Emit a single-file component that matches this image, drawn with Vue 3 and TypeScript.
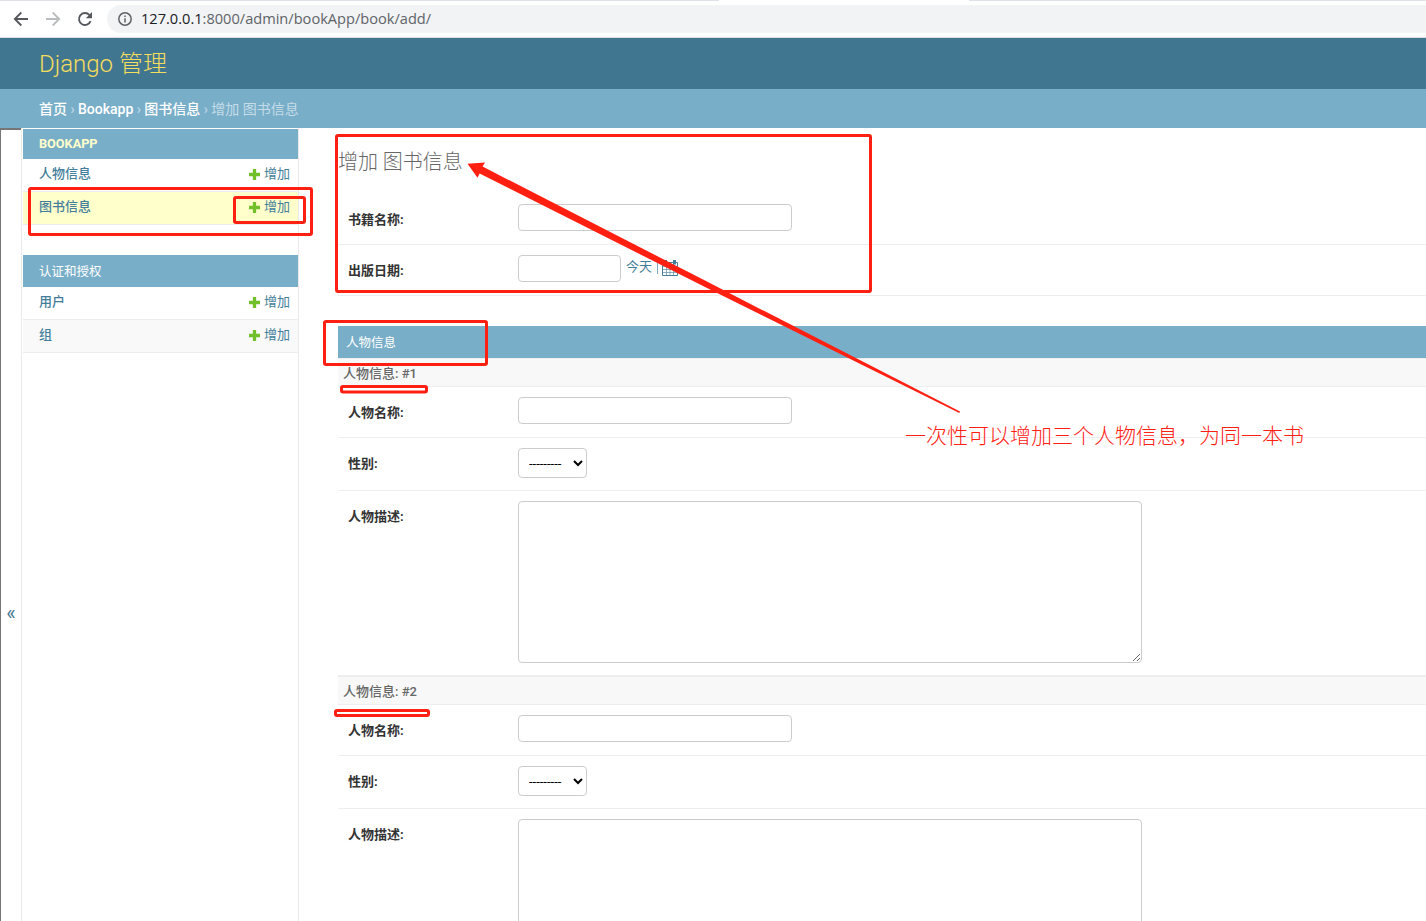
<script setup lang="ts">
import { ref } from 'vue'

interface NavItem {
  name: string
  current?: boolean
  alt?: boolean
}
interface NavApp {
  title: string
  latin?: boolean
  items: NavItem[]
}

const apps: NavApp[] = [
  { title: 'BOOKAPP', latin: true, items: [{ name: '人物信息' }, { name: '图书信息', current: true }] },
  { title: '认证和授权', items: [{ name: '用户' }, { name: '组', alt: true }] },
]

const book = ref({ title: '', date: '' })
const people = ref([1, 2].map((no) => ({ no, name: '', gender: '', desc: '' })))
</script>

<template>
  <div class="window">
    <div class="toolbar">
      <div class="tabline"><i class="tab-left"></i><i class="tab-right"></i></div>
      <svg class="nav-icon" viewBox="0 0 16 16"><path d="M15 8H2M8.3 1.5 1.8 8l6.5 6.5" /></svg>
      <svg class="nav-icon off" viewBox="0 0 16 16"><path d="M1 8h13M7.7 1.5 14.2 8l-6.5 6.5" /></svg>
      <svg class="nav-icon" viewBox="0 0 16 16">
        <path d="M13.6 10.2A6 6 0 1 1 12.3 3.8L14 5.6" />
        <path class="solid" d="M15 1v6.2H8.8z" />
      </svg>
      <div class="address">
        <svg class="info" viewBox="0 0 14 14">
          <circle cx="7" cy="7" r="6.2" />
          <path d="M7 6.2v4.2M7 3.5v1.5" />
        </svg>
        <span class="url"><b>127.0.0.1</b>:8000/admin/bookApp/book/add/</span>
      </div>
    </div>

    <header class="header">Django 管理</header>
    <nav class="breadcrumbs">
      <a>首页</a><i>›</i><a>Bookapp</a><i>›</i><a>图书信息</a><i>›</i><span>增加 图书信息</span>
    </nav>

    <div class="main">
      <button class="toggle" type="button">«</button>
      <aside class="sidebar">
        <section v-for="app in apps" :key="app.title" class="app">
          <h2 :class="{ latin: app.latin }">{{ app.title }}</h2>
          <div
            v-for="item in app.items"
            :key="item.name"
            class="model"
            :class="{ current: item.current, alt: item.alt }"
          >
            <a class="model-name">{{ item.name }}</a>
            <a class="add">
              <svg viewBox="0 0 10 10"><path d="M3.5 0h3v3.5H10v3H6.5V10h-3V6.5H0v-3h3.5z" /></svg>
              增加
            </a>
          </div>
        </section>
      </aside>

      <main class="content">
        <h1>增加 图书信息</h1>
        <div class="row">
          <label>书籍名称:</label>
          <input v-model="book.title" class="text" type="text" />
        </div>
        <div class="row">
          <label>出版日期:</label>
          <input v-model="book.date" class="text date" type="text" />
          <span class="shortcuts">
            今天<i></i>
            <svg viewBox="0 0 16 16">
              <path d="M.5 2.5h15v13H.5z" />
              <path class="grid" d="M1 6.5h14M1 9.5h14M1 12.5h14M4.5 4v11M8 4v11M11.5 4v11" />
              <path class="rings" d="M3.5 0v4.5M12.5 0v4.5" />
            </svg>
          </span>
        </div>

        <section class="inline">
          <h2>人物信息</h2>
          <div v-for="p in people" :key="p.no">
            <h3>人物信息: <span>#{{ p.no }}</span></h3>
            <div class="row">
              <label>人物名称:</label>
              <input v-model="p.name" class="text" type="text" />
            </div>
            <div class="row tall">
              <label>性别:</label>
              <select v-model="p.gender">
                <option value="">---------</option>
                <option value="m">男</option>
                <option value="f">女</option>
              </select>
            </div>
            <div class="row area">
              <label>人物描述:</label>
              <textarea v-model="p.desc"></textarea>
            </div>
          </div>
        </section>
      </main>
    </div>

    <svg class="marks" viewBox="0 0 1426 921">
      <g class="frames">
        <rect x="29.5" y="188.5" width="282" height="46" rx="1.5" />
        <rect x="234.5" y="197.5" width="70" height="25" rx="1.5" />
        <rect x="336.5" y="135.5" width="534" height="156" rx="1.5" />
        <rect x="324.5" y="321.5" width="162" height="43" rx="1.5" />
        <rect x="341.5" y="386.5" width="85" height="5.5" rx="1.5" />
        <rect x="335.5" y="710.5" width="93" height="5" rx="1.5" />
      </g>
      <path class="arrow" d="M467.5 163.8 485 162.6 482.6 166.6 705 280.6 960 411.5 959.3 413 705 287 479.6 173.4 477.5 177.8z" />
    </svg>
    <p class="note">一次性可以增加三个人物信息，为同一本书</p>
  </div>
</template>

<style>
body {
  margin: 0;
  overflow: hidden;
}
</style>

<style scoped>
* {
  box-sizing: border-box;
}
i {
  font-style: normal;
}
.window {
  position: relative;
  display: flex;
  flex-direction: column;
  width: 1426px;
  height: 921px;
  overflow: hidden;
  background: #fff;
  color: #333;
  font: 13px/18px Roboto, "Noto Sans CJK SC", sans-serif;
}
.toolbar {
  position: relative;
  display: flex;
  flex: none;
  align-items: center;
  height: 38px;
  padding-left: 13px;
  border-bottom: 1px solid #dadce0;
}
.tabline {
  position: absolute;
  inset: 0 0 auto;
  display: flex;
  justify-content: space-between;
  height: 1px;
}
.tab-left {
  width: 719px;
  background: #dee1e6;
}
.tab-right {
  width: 457px;
  background: #dee1e6;
}
.nav-icon {
  width: 16px;
  height: 16px;
  margin-right: 16px;
  fill: none;
  stroke: #54575b;
  stroke-width: 1.8;
}
.nav-icon.off {
  stroke: #babcbe;
}
.nav-icon .solid {
  fill: #54575b;
  stroke: none;
}
.address {
  display: flex;
  flex: 1;
  align-items: center;
  height: 28px;
  margin-left: -2px;
  padding-left: 11px;
  border-radius: 14px 0 0 14px;
  background: #f1f3f4;
}
.info {
  width: 14px;
  height: 14px;
  margin-right: 9px;
  fill: none;
  stroke: #5f6368;
  stroke-width: 1.5;
}
.url {
  padding-bottom: 2px;
  color: #5f6368;
  font: 14.6px/20px "Open Sans", "Noto Sans", sans-serif;
}
.url b {
  color: #202124;
  font-weight: 400;
}
.header {
  flex: none;
  height: 51px;
  padding-left: 39px;
  background: #417690;
  color: #f5dd5d;
  font-size: 24px;
  font-weight: 300;
  line-height: 53px;
}
.breadcrumbs {
  flex: none;
  height: 39px;
  padding-left: 39px;
  background: #79aec8;
  color: #c4dce8;
  font-size: 14px;
  line-height: 41px;
}
.breadcrumbs a {
  color: #fff;
  font-weight: 500;
}
.breadcrumbs i {
  display: inline-block;
  width: 11px;
  text-align: center;
}
.main {
  display: flex;
  flex: 1;
  min-height: 0;
}
.toggle {
  display: flex;
  flex: none;
  align-items: center;
  justify-content: center;
  width: 21px;
  height: 967px;
  padding: 0;
  border: 0 solid #767676;
  border-width: 2px 0 0 1px;
  background: #fff;
  color: #417690;
  font: 20px/20px Roboto, sans-serif;
}
.sidebar {
  flex: none;
  width: 278px;
  padding: 1px 0 0 1px;
  border: solid #eaeaea;
  border-width: 0 1px;
}
.app {
  margin-bottom: 30px;
}
.app h2 {
  height: 32px;
  margin: 0;
  padding-left: 16px;
  background: #79aec8;
  color: #fff;
  font-size: 12.5px;
  font-weight: 400;
  line-height: 34px;
}
.app h2.latin {
  height: 30px;
  color: #ffc;
  font-size: 12.7px;
  font-weight: 700;
  line-height: 30px;
}
.model {
  display: flex;
  justify-content: space-between;
  height: 33px;
  padding: 0 8px 0 16px;
  border-bottom: 1px solid #eee;
  color: #447e9b;
  line-height: 30px;
}
.model.current {
  background: #ffc;
}
.model.alt {
  background: #f9f9f9;
}
.model-name {
  font-weight: 500;
}
.add {
  display: flex;
  align-items: center;
  gap: 5px;
  height: 30px;
}
.add svg {
  width: 11px;
  height: 11px;
  margin-right: -1px;
  fill: #70bf2b;
}
.content {
  flex: 1;
  padding: 21px 0 0 39px;
}
h1 {
  height: 26px;
  margin: 0 0 19px;
  color: #666;
  font-size: 20px;
  font-weight: 300;
  line-height: 26px;
}
.row {
  display: flex;
  align-items: flex-start;
  height: 51px;
  padding: 10px;
  border-bottom: 1px solid #eee;
}
.row.tall {
  height: 53px;
}
.row.area {
  height: 185px;
}
label {
  width: 170px;
  padding-top: 7px;
  color: #333;
  font-weight: 700;
}
.text,
select,
textarea {
  margin: 0;
  border: 1px solid #ccc;
  border-radius: 4px;
  background: #fff;
  color: #000;
  font: 13px Roboto, sans-serif;
  outline: none;
}
.text {
  width: 274px;
  height: 27px;
}
.text.date {
  width: 103px;
}
select {
  width: 69px;
  height: 30px;
  padding: 0 1px 0 6px;
}
textarea {
  width: 624px;
  height: 162px;
}
.shortcuts {
  display: flex;
  padding: 3px 0 0 5px;
  color: #447e9b;
}
.shortcuts i {
  width: 1px;
  height: 13px;
  margin: 3px 4px 0 5px;
  background: #8ba6b4;
}
.shortcuts svg {
  width: 16px;
  height: 16px;
  margin-top: 2px;
  fill: none;
  stroke: #447e9b;
}
.shortcuts .grid {
  stroke-width: 0.6;
}
.shortcuts .rings {
  stroke-width: 3;
}
.inline {
  margin-top: 30px;
}
.inline h2 {
  height: 32px;
  margin: 0;
  padding-left: 8px;
  background: #79aec8;
  color: #fff;
  font-size: 12.5px;
  font-weight: 400;
  line-height: 34px;
}
h3 {
  height: 29px;
  margin: 0;
  padding-left: 5px;
  border: solid #eee;
  border-width: 1px 0;
  background: #f8f8f8;
  color: #666;
  font-size: 13px;
  font-weight: 500;
  line-height: 30px;
}
.marks {
  position: absolute;
  inset: 0;
  width: 1426px;
  height: 921px;
  pointer-events: none;
}
.frames {
  fill: none;
  stroke: #ff2012;
  stroke-width: 3;
}
.arrow {
  fill: #ff2012;
}
.note {
  position: absolute;
  top: 422px;
  left: 905px;
  margin: 0;
  color: #ff2012;
  font-size: 21px;
  font-weight: 300;
  line-height: 28px;
  white-space: nowrap;
}
</style>
